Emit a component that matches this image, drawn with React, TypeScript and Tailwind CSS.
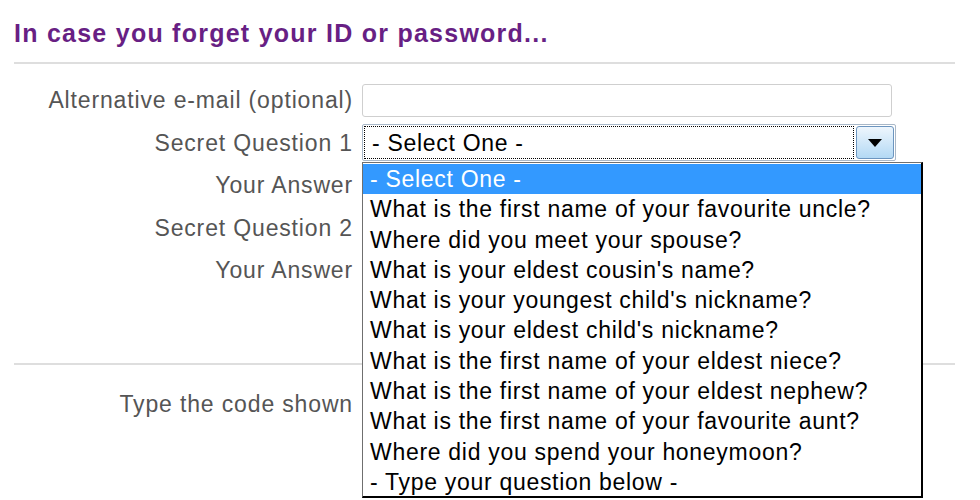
import React from 'react';

const questions = [
  '- Select One -',
  'What is the first name of your favourite uncle?',
  'Where did you meet your spouse?',
  "What is your eldest cousin's name?",
  "What is your youngest child's nickname?",
  "What is your eldest child's nickname?",
  'What is the first name of your eldest niece?',
  'What is the first name of your eldest nephew?',
  'What is the first name of your favourite aunt?',
  'Where did you spend your honeymoon?',
  '- Type your question below -',
];

function Label({ text }: { text: string }) {
  return (
    <div className="w-[339px] shrink-0 text-right whitespace-nowrap text-[#555555] tracking-[0.85px]">
      {text}
    </div>
  );
}

function TextBox() {
  return <div className="w-[530px] h-[33px] rounded-[3px] border border-[#cfcfcf] bg-white" />;
}

export default function App() {
  return (
    <div
      className="relative w-[980px] h-[500px] overflow-hidden bg-white pl-[14px] pr-[25px]"
      style={{ fontFamily: '"Liberation Sans", Arial, sans-serif' }}
    >
      {/* header */}
      <div className="pt-[18px] h-[47px] text-[25px] leading-[30px] font-bold text-[#681f84] tracking-[1.25px] whitespace-nowrap">
        In case you forget your ID or password...
      </div>
      <div className="mt-[15px] h-[2px] bg-[#dedede]" />

      {/* form rows */}
      <div className="mt-[15px] text-[23px]">
        <div className="h-[42.5px] flex items-center gap-[9px]">
          <Label text="Alternative e-mail (optional)" />
          <TextBox />
        </div>
        <div className="h-[42.5px] flex items-center gap-[9px]">
          <Label text="Secret Question 1" />
          <div className="flex items-center w-[534px] h-[37px] rounded-[2px] border border-[#a9b8c8] bg-white p-px">
            <div className="flex-1 h-full border border-dotted border-black flex items-center pl-[7px] text-black tracking-[0.7px]">
              - Select One -
            </div>
            <div className="ml-[2px] w-[38px] h-full rounded-[3px] border border-[#6c95bf] bg-gradient-to-b from-[#eef6fd] to-[#b3d9f4] flex items-center justify-center">
              <svg width="16" height="10" viewBox="0 0 16 10">
                <path d="M1 1 L15 1 L8 9 Z" fill="#000" />
              </svg>
            </div>
          </div>
        </div>
        <div className="h-[42.5px] flex items-center gap-[9px]">
          <Label text="Your Answer" />
          <TextBox />
        </div>
        <div className="h-[42.5px] flex items-center gap-[9px]">
          <Label text="Secret Question 2" />
          <TextBox />
        </div>
        <div className="h-[42.5px] flex items-center gap-[9px]">
          <Label text="Your Answer" />
          <TextBox />
        </div>

        <div className="mt-[71px] h-[2px] bg-[#dedede]" />

        <div className="mt-[19px] h-[42px] flex items-center gap-[9px]">
          <Label text="Type the code shown" />
          <TextBox />
        </div>
      </div>

      {/* open dropdown list */}
      <div className="absolute left-[362px] top-[162px] w-[561px] h-[336px] bg-white border-l border-t border-[#6f6f6f] border-r-2 border-b-2 border-r-black border-b-black pt-px text-[23px] tracking-[0.7px]">
        {questions.map((q, i) => (
          <div
            key={q}
            className={
              i === 0
                ? 'h-[30.3px] flex items-center pl-[7px] whitespace-nowrap bg-[#3399ff] text-white'
                : 'h-[30.3px] flex items-center pl-[7px] whitespace-nowrap text-black'
            }
          >
            {q}
          </div>
        ))}
      </div>
    </div>
  );
}
